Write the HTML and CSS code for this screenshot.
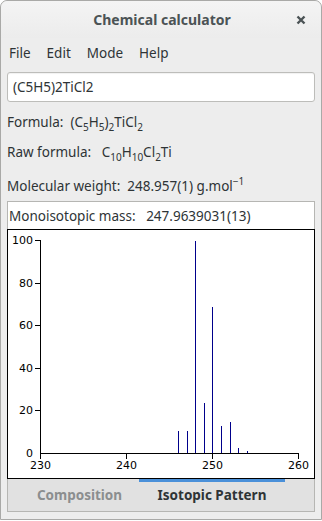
FILE: index.html
```html
<!DOCTYPE html>
<html lang="en">
<head>
  <meta charset="UTF-8" />
  <title>Chemical calculator</title>
  <link rel="stylesheet" href="styles.css">
</head>
<body>
  <div class="window">
    <div class="titlebar">
      <span class="title">Chemical calculator</span>
      <svg class="close" width="10" height="10" viewBox="0 0 10 10">
        <path d="M1.5 1.5 L8.5 8.5 M8.5 1.5 L1.5 8.5" />
      </svg>
    </div>

    <div class="menubar">
      <span>File</span>
      <span>Edit</span>
      <span>Mode</span>
      <span>Help</span>
    </div>

    <div class="content">
      <input class="entry" type="text" value="(C5H5)2TiCl2" />

      <div class="row row-formula">Formula:&nbsp; (C<sub>5</sub>H<sub>5</sub>)<sub>2</sub>TiCl<sub>2</sub></div>
      <div class="row row-raw">Raw formula:&nbsp;&nbsp; C<sub>10</sub>H<sub>10</sub>Cl<sub>2</sub>Ti</div>
      <div class="row row-weight">Molecular weight:&nbsp; 248.957(1) g.mol<sup>&minus;1</sup></div>

      <div class="mono">Monoisotopic mass:&nbsp;&nbsp; 247.9639031(13)</div>

      <div class="chart">
        <svg width="306" height="247" viewBox="0 0 306 247">
          <g class="axis">
            <line x1="32.5" y1="10" x2="32.5" y2="223.5" />
            <line x1="32" y1="223.5" x2="291" y2="223.5" />
            <!-- y ticks -->
            <line x1="27" y1="10.5" x2="32" y2="10.5" />
            <line x1="27" y1="53.5" x2="32" y2="53.5" />
            <line x1="27" y1="95.5" x2="32" y2="95.5" />
            <line x1="27" y1="138.5" x2="32" y2="138.5" />
            <line x1="27" y1="180.5" x2="32" y2="180.5" />
            <!-- x ticks -->
            <line x1="32.5" y1="223" x2="32.5" y2="229" />
            <line x1="118.5" y1="223" x2="118.5" y2="229" />
            <line x1="204.5" y1="223" x2="204.5" y2="229" />
            <line x1="290.5" y1="223" x2="290.5" y2="229" />
          </g>
          <g class="labels-y">
            <text x="25" y="14">100</text>
            <text x="25" y="57">80</text>
            <text x="25" y="99">60</text>
            <text x="25" y="142">40</text>
            <text x="25" y="184">20</text>
            <text x="25" y="227">0</text>
          </g>
          <g class="labels-x">
            <text x="32.5" y="239">230</text>
            <text x="118.5" y="239">240</text>
            <text x="204.5" y="239">250</text>
            <text x="290.5" y="239">260</text>
          </g>
          <g class="peaks">
            <line x1="170.5" y1="201" x2="170.5" y2="223" />
            <line x1="179.5" y1="201" x2="179.5" y2="223" />
            <line x1="187.5" y1="11" x2="187.5" y2="223" />
            <line x1="196.5" y1="173" x2="196.5" y2="223" />
            <line x1="204.5" y1="77" x2="204.5" y2="223" />
            <line x1="213.5" y1="196" x2="213.5" y2="223" />
            <line x1="222.5" y1="192" x2="222.5" y2="223" />
            <line x1="230.5" y1="218" x2="230.5" y2="223" />
            <line x1="239.5" y1="221" x2="239.5" y2="223" />
          </g>
        </svg>
      </div>

      <div class="tabs">
        <span class="tab">Composition</span>
        <span class="tab active">Isotopic Pattern</span>
      </div>
    </div>
  </div>
</body>
</html>
```

FILE: styles.css
```css
:root {
  --bg: #ededed;
  --text: #2e3436;
  --border: #b6b6b3;
  --accent: #4a90d9;
}

body {
  margin: 0;
  background: #ffffff;
  font-family: 'Noto Sans', 'Open Sans', sans-serif;
  font-size: 13px;
  color: var(--text);
}

.window {
  width: 322px;
  height: 520px;
  box-sizing: border-box;
  background: var(--bg);
  border: 1px solid #a9a9a7;
  border-radius: 7px 7px 0 0;
}

.titlebar {
  height: 37px;
  display: flex;
  align-items: center;
  justify-content: center;
  position: relative;
  background: linear-gradient(#f4f4f4, #ececec);
  border-radius: 7px 7px 0 0;
}

.title {
  font-weight: bold;
  font-size: 14px;
  color: #4b5355;
  margin-left: 2px;
}

.close {
  position: absolute;
  right: 15px;
  top: 14px;
}

.close path {
  stroke: #4b5355;
  stroke-width: 2.4;
  fill: none;
}

.menubar {
  display: flex;
  height: 30px;
  align-items: center;
  padding: 0 0 0 7px;
  font-size: 13.5px;
}

.menubar span {
  padding: 0 8px 0 1px;
  margin-right: 7px;
}

.content {
  padding: 0 6px;
}

.entry {
  display: block;
  width: 100%;
  height: 30px;
  margin-top: 4px;
  box-sizing: border-box;
  border: 1px solid #bdbdba;
  border-radius: 3px;
  background: #fff;
  padding: 0 5px;
  font: 13.5px 'Noto Sans', sans-serif;
  color: var(--text);
  box-shadow: inset 0 1px 1px rgba(0, 0, 0, 0.06);
}

.row {
  height: 30px;
  line-height: 30px;
  white-space: pre;
  font-size: 13.5px;
}

.row-formula {
  margin-top: 5px;
}

.row-weight {
  margin-top: 4px;
}

sub, sup {
  font-size: 10px;
  line-height: 0;
}

sub {
  vertical-align: -4px;
}

sup {
  vertical-align: 6px;
}

.mono {
  height: 28px;
  box-sizing: border-box;
  border: 1px solid var(--border);
  border-bottom: none;
  background: #fff;
  display: flex;
  align-items: center;
  padding-left: 1px;
  white-space: pre;
  font-size: 13.5px;
}

.chart {
  height: 250px;
  box-sizing: border-box;
  border: 1px solid #000;
  background: #fff;
}

.chart svg {
  display: block;
}

.axis line {
  stroke: #000;
  stroke-width: 1;
}

.peaks line {
  stroke: #00008b;
  stroke-width: 1;
}

.labels-y text,
.labels-x text {
  font-family: 'DejaVu Sans', sans-serif;
  font-size: 11px;
  fill: #000;
}

.labels-y text {
  text-anchor: end;
}

.labels-x text {
  text-anchor: middle;
}

.tabs {
  height: 33px;
  box-sizing: border-box;
  display: flex;
  background: #e1e1e1;
  border: 1px solid var(--border);
  border-top: none;
}

.tab {
  display: flex;
  align-items: center;
  justify-content: center;
  font-weight: bold;
  font-size: 13.5px;
  color: #8b8e8f;
  border-top: 3px solid transparent;
  padding-bottom: 3px;
}

.tab:first-child {
  width: 119px;
  padding-left: 12px;
}

.tab.active {
  width: 146px;
  color: var(--text);
  border-top-color: var(--accent);
}
```
